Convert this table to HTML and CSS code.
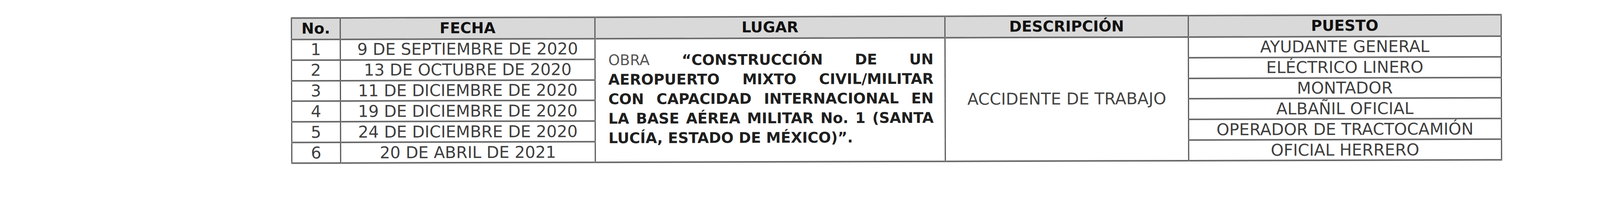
FILE: index.html
```html
<!DOCTYPE html>
<html lang="es">
<head>
<meta charset="utf-8">
<title>Relación de accidentes</title>
<link rel="stylesheet" href="styles.css">
</head>
<body>
<div class="page">
  <table class="sheet">
    <colgroup>
      <col class="c-no">
      <col class="c-fecha">
      <col class="c-lugar">
      <col class="c-desc">
      <col class="c-puesto">
    </colgroup>
    <thead>
      <tr>
        <th>No.</th>
        <th>FECHA</th>
        <th>LUGAR</th>
        <th>DESCRIPCIÓN</th>
        <th>PUESTO</th>
      </tr>
    </thead>
    <tbody>
      <tr>
        <td>1</td>
        <td>9 DE SEPTIEMBRE DE 2020</td>
        <td rowspan="6" class="lugar">
          <span class="ln"><span class="obra">OBRA</span> “CONSTRUCCIÓN DE UN</span>
          <span class="ln">AEROPUERTO MIXTO CIVIL/MILITAR</span>
          <span class="ln">CON CAPACIDAD INTERNACIONAL EN</span>
          <span class="ln">LA BASE AÉREA MILITAR No. 1 (SANTA</span>
          <span class="ln ln-last">LUCÍA, ESTADO DE MÉXICO)”.</span>
        </td>
        <td rowspan="6" class="desc">ACCIDENTE DE TRABAJO</td>
        <td>AYUDANTE GENERAL</td>
      </tr>
      <tr>
        <td>2</td>
        <td>13 DE OCTUBRE DE 2020</td>
        <td>ELÉCTRICO LINERO</td>
      </tr>
      <tr>
        <td>3</td>
        <td>11 DE DICIEMBRE DE 2020</td>
        <td>MONTADOR</td>
      </tr>
      <tr>
        <td>4</td>
        <td>19 DE DICIEMBRE DE 2020</td>
        <td>ALBAÑIL OFICIAL</td>
      </tr>
      <tr>
        <td>5</td>
        <td>24 DE DICIEMBRE DE 2020</td>
        <td>OPERADOR DE TRACTOCAMIÓN</td>
      </tr>
      <tr>
        <td>6</td>
        <td>20 DE ABRIL DE 2021</td>
        <td>OFICIAL HERRERO</td>
      </tr>
    </tbody>
  </table>
</div>
</body>
</html>
```

FILE: styles.css
```css
:root {
  /* one pixel of the 5000px-wide reference frame */
  --u: calc(100vw / 5000);
}

html {
  margin: 0;
  padding: 0;
  background: #ffffff;
  overflow: hidden;
}

body {
  margin: 0;
  padding: 0;
  min-height: 100vh;
  background: #ffffff;
  font-family: "DejaVu Sans", "Liberation Sans", sans-serif;
}

.page {
  padding: calc(49 * var(--u)) 0 calc(20 * var(--u)) calc(910 * var(--u));
}

.sheet {
  border-collapse: collapse;
  table-layout: fixed;
  width: calc(3780 * var(--u));
  transform: rotate(-0.16deg);
  transform-origin: 50% 50%;
}

.c-no { width: calc(152 * var(--u)); }
.c-fecha { width: calc(797 * var(--u)); }
.c-lugar { width: calc(1093 * var(--u)); }
.c-desc { width: calc(761 * var(--u)); }
.c-puesto { width: calc(977 * var(--u)); }

.sheet th,
.sheet td {
  border-style: solid;
  border-color: #6a6a6a #555555;
  border-width: calc(6 * var(--u)) calc(4 * var(--u));
  padding: 0;
  text-align: center;
  vertical-align: middle;
  white-space: nowrap;
  overflow: hidden;
}

.sheet thead tr {
  height: calc(67 * var(--u));
}

.sheet tbody tr {
  height: calc(64.5 * var(--u));
}

.sheet th {
  background: #d9d9d9;
  font-weight: bold;
  font-size: calc(47 * var(--u));
  line-height: 1;
  color: #111111;
}

.sheet td {
  font-size: calc(51 * var(--u));
  line-height: 1;
  color: #3f3f3f;
}

.sheet td.lugar {
  white-space: normal;
  text-align: left;
  padding: 0 calc(34 * var(--u)) calc(6 * var(--u)) calc(39 * var(--u));
  font-size: calc(46 * var(--u));
  font-weight: bold;
  line-height: calc(61 * var(--u));
  color: #1f1f1f;
}

.ln {
  display: block;
  text-align: justify;
  text-align-last: justify;
}

.ln-last {
  text-align-last: left;
}

.obra {
  font-weight: normal;
  color: #555555;
}

.sheet td.desc {
  color: #444444;
}
```
